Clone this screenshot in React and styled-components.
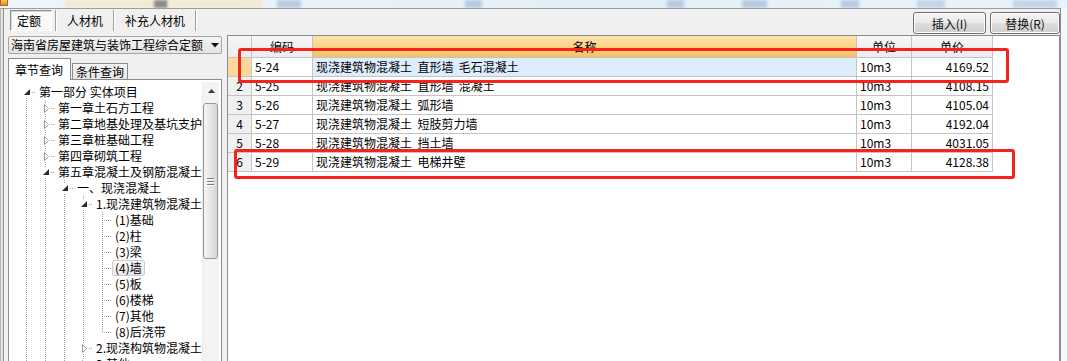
import React from 'react'
import styled, { createGlobalStyle, css } from 'styled-components'

const GlobalStyle = createGlobalStyle`
  html, body { margin: 0; padding: 0; background: #eef6f9; }
  body {
    font-family: "Noto Sans CJK SC", "Noto Sans", sans-serif;
    font-size: 12px;
    color: #000;
  }
  * { box-sizing: border-box; }
`

const Screen = styled.div`
  position: relative;
  width: 1067px;
  height: 361px;
  overflow: hidden;
  display: flex;
  flex-direction: column;
`

// blurred strip of whatever sits behind the window
const Backdrop = styled.div`
  height: 8px;
  flex: none;
  display: flex;
  background: linear-gradient(to right, #eef5fb, #e3eff8 55%, #e9f3fa);
  overflow: hidden;
`
const AppIcon = styled.div`
  width: 8px;
  height: 6px;
  flex: none;
  background: linear-gradient(#f9c86a, #e48a22);
  border: 1px solid #b8651a;
  border-top: none;
`
const Blob = styled.div`
  flex: none;
  width: ${p => p.$w}px;
  margin-left: ${p => p.$gap}px;
  background: ${p => p.$color};
  filter: blur(1.5px);
`

const Desk = styled.div`
  flex: 1;
  display: flex;
  min-height: 0;
`
const Outside = styled.div`
  flex: 1;
  background: #f1f9fa;
`
const Window = styled.div`
  width: 1061px;
  flex: none;
  display: flex;
  flex-direction: column;
  background: #f0f0f0;
  border-top: 1px solid #9c9c9c;
  border-left: 1px solid #b8b8b8;
  border-right: 1px solid #8e8e8e;
  box-shadow: inset 2px 0 0 #e4e4e4, inset 3px 0 0 #8f8f8f;
  padding-left: 3px;
`

const Toolbar = styled.div`
  height: 26px;
  flex: none;
  display: flex;
  justify-content: space-between;
  align-items: flex-start;
  padding-left: 6px;
`
const TabStrip = styled.div`
  display: flex;
  margin-top: 1px;
  height: 21px;
`
const Tab = styled.div`
  width: ${p => p.$w}px;
  height: 21px;
  display: flex;
  align-items: center;
  justify-content: center;
  line-height: 14px;
  ${p => p.$active && css`
    justify-content: flex-start;
    padding-left: 6px;
    background: #f9f9f9;
    border: 1px solid;
    border-color: #8d8d8d #ffffff #ffffff #8d8d8d;
    box-shadow: inset 1px 1px 0 #d8d8d8;
  `}
`
const Sep = styled.div`
  width: 2px;
  height: 21px;
  margin-left: ${p => p.$gap || 0}px;
  border-left: 1px solid #a0a0a0;
  border-right: 1px solid #ffffff;
`
const Buttons = styled.div`
  display: flex;
  gap: 4px;
  margin-top: 3px;
`
const Button = styled.div`
  width: ${p => p.$w}px;
  height: 22px;
  display: flex;
  align-items: center;
  justify-content: center;
  border: 1px solid #707070;
  border-radius: 3px;
  background: linear-gradient(#f2f2f2 0%, #ebebeb 50%, #dddddd 51%, #cfcfcf 100%);
  box-shadow: inset 0 0 0 1px #fcfcfc;
  color: #111;
`

const Main = styled.div`
  flex: 1;
  display: flex;
  gap: 5px;
  padding-left: 4px;
  min-height: 0;
`
const LeftPanel = styled.div`
  width: 214px;
  flex: none;
  display: flex;
  flex-direction: column;
  min-height: 0;
`
const Dropdown = styled.div`
  margin-top: 1px;
  height: 18px;
  flex: none;
  display: flex;
  align-items: center;
  justify-content: space-between;
  padding: 0 2px 0 2px;
  border: 1px solid #a5a5a5;
  border-radius: 2px;
  background: linear-gradient(#f4f4f4, #e4e4e4);
  line-height: 14px;
  white-space: nowrap;
`
const SubTabs = styled.div`
  margin-top: 4px;
  height: 21px;
  flex: none;
  display: flex;
  align-items: flex-end;
`
const SubTab = styled.div`
  width: ${p => p.$w}px;
  display: flex;
  align-items: center;
  border: 1px solid #8c8c8c;
  border-bottom: none;
  line-height: 14px;
  ${p => p.$active ? css`
    height: 22px;
    margin-bottom: -1px;
    padding-left: 6px;
    background: #ffffff;
    position: relative;
    z-index: 1;
  ` : css`
    height: 16px;
    margin-left: 1px;
    justify-content: center;
    background: linear-gradient(#f6f6f6, #e6e6e6);
  `}
`
const TreeBox = styled.div`
  flex: 1;
  min-height: 0;
  display: flex;
  border: 1px solid #8c8c8c;
  border-bottom: none;
  background: #fff;
  overflow: hidden;
`
const TreeList = styled.div`
  flex: 1;
  min-width: 0;
  padding: 4px 0 0 8px;
  overflow: hidden;
`
const TreeRow = styled.div`
  display: flex;
  height: 16px;
  line-height: 14px;
  white-space: nowrap;
`

const dotsV = (top, h) =>
  `repeating-linear-gradient(to bottom, #a0a0a0 0 1px, transparent 1px 2px) 9px ${top}px / 1px ${h}px no-repeat`
const dotsH = `repeating-linear-gradient(to right, #a0a0a0 0 1px, transparent 1px 2px) 9px 8px / 10px 1px no-repeat`

const Guide = styled.div`
  width: 19px;
  flex: none;
  background: ${p => (p.$on ? dotsV(0, 16) : 'none')};
`
const Joint = styled.div`
  width: 19px;
  flex: none;
  display: flex;
  align-items: center;
  background: ${p => [p.$up && dotsV(0, 8), p.$next && dotsV(8, 8), dotsH].filter(Boolean).join(', ')};
`
const Expander = styled.div`
  width: 8px;
  height: 10px;
  margin-left: 6px;
  display: flex;
  align-items: center;
  justify-content: center;
  background: #fff;
`
const Label = styled.div`
  height: 16px;
  display: flex;
  align-items: center;
  padding: 0 2px;
  border: 1px solid transparent;
  border-radius: 2px;
  ${p => p.$hot && css`
    border-color: #cdcdcd;
    background: linear-gradient(#fafafa, #e8e8e8);
  `}
`

const ScrollBar = styled.div`
  width: 17px;
  flex: none;
  margin: 2px 2px 0 0;
  display: flex;
  flex-direction: column;
  align-items: stretch;
  background: #f3f3f3;
  border-left: 1px solid #ebebeb;
`
const ScrollArrow = styled.div`
  height: 17px;
  display: flex;
  align-items: center;
  justify-content: center;
`
const Thumb = styled.div`
  margin: 4px 1px 0 0;
  height: 156px;
  display: flex;
  flex-direction: column;
  align-items: center;
  justify-content: center;
  gap: 2px;
  border: 1px solid #979797;
  border-radius: 3px;
  background: linear-gradient(to right, #f6f6f6, #e6e6e6 50%, #d6d6d6);
`
const Grip = styled.div`
  width: 7px;
  height: 1px;
  background: #7a7a7a;
  box-shadow: 0 1px 0 #ffffff;
`

const GridPanel = styled.div`
  flex: 1;
  min-width: 0;
  border: 1px solid #8c8c8c;
  border-bottom: none;
  background: #fff;
  overflow: hidden;
`
const GridRow = styled.div`
  display: grid;
  grid-template-columns: 24px 61px 544px 55px 81px;
  height: ${p => (p.$head ? 22 : 19)}px;
`
const Cell = styled.div`
  display: flex;
  align-items: center;
  justify-content: ${p => (p.$align === 'right' ? 'flex-end' : p.$align === 'center' ? 'center' : 'flex-start')};
  padding: 0 3px;
  border-right: 1px solid #c4c4c4;
  border-bottom: 1px solid #c4c4c4;
  background: ${p => p.$bg || '#ffffff'};
  line-height: 14px;
  white-space: nowrap;
  overflow: hidden;
`

const Mark = styled.div`
  position: absolute;
  left: ${p => p.$x}px;
  top: ${p => p.$y}px;
  width: ${p => p.$w}px;
  height: ${p => p.$h}px;
  border: 3px solid #f4231b;
  border-radius: 3px;
  pointer-events: none;
`

const HEAD_GRAY = 'linear-gradient(#f7f7f7, #ececec)'
const HEAD_ORANGE = 'linear-gradient(#fde4ac, #f3c263)'
const NUM_GRAY = '#f0f0f0'

const blobs = [
  { gap: 57, w: 89, color: '#f3ead2' },
  { gap: 0, w: 14, color: '#8c8b84' },
  { gap: 0, w: 95, color: '#f3ead2' },
  { gap: 14, w: 24, color: '#b7cbe0' },
  { gap: 164, w: 17, color: '#b7cbe0' },
  { gap: 185, w: 17, color: '#b7cbe0' },
  { gap: 58, w: 25, color: '#b7cbe0' },
  { gap: 74, w: 18, color: '#b7cbe0' },
  { gap: 58, w: 28, color: '#c2d4e6' },
  { gap: 68, w: 44, color: '#c2d4e6' },
]

// level, text, kind ('open' | 'closed' | 'leaf'), guides for ancestor lines, has next sibling
const tree = [
  { level: 0, text: '第一部分 实体项目', kind: 'open', guides: [], next: true, first: true },
  { level: 1, text: '第一章土石方工程', kind: 'closed', guides: [true], next: true },
  { level: 1, text: '第二章地基处理及基坑支护', kind: 'closed', guides: [true], next: true },
  { level: 1, text: '第三章桩基础工程', kind: 'closed', guides: [true], next: true },
  { level: 1, text: '第四章砌筑工程', kind: 'closed', guides: [true], next: true },
  { level: 1, text: '第五章混凝土及钢筋混凝土', kind: 'open', guides: [true], next: true },
  { level: 2, text: '一、现浇混凝土', kind: 'open', guides: [true, true], next: true },
  { level: 3, text: '1.现浇建筑物混凝土', kind: 'open', guides: [true, true, true], next: true },
  { level: 4, text: '(1)基础', kind: 'leaf', guides: [true, true, true, true], next: true },
  { level: 4, text: '(2)柱', kind: 'leaf', guides: [true, true, true, true], next: true },
  { level: 4, text: '(3)梁', kind: 'leaf', guides: [true, true, true, true], next: true },
  { level: 4, text: '(4)墙', kind: 'leaf', guides: [true, true, true, true], next: true, hot: true },
  { level: 4, text: '(5)板', kind: 'leaf', guides: [true, true, true, true], next: true },
  { level: 4, text: '(6)楼梯', kind: 'leaf', guides: [true, true, true, true], next: true },
  { level: 4, text: '(7)其他', kind: 'leaf', guides: [true, true, true, true], next: true },
  { level: 4, text: '(8)后浇带', kind: 'leaf', guides: [true, true, true, true], next: false },
  { level: 3, text: '2.现浇构筑物混凝土', kind: 'closed', guides: [true, true, true], next: true },
  { level: 3, text: '3.其他', kind: 'closed', guides: [true, true, true], next: false },
]

const rows = [
  { n: '', code: '5-24', name: '现浇建筑物混凝土  直形墙  毛石混凝土', unit: '10m3', price: '4169.52', current: true },
  { n: '2', code: '5-25', name: '现浇建筑物混凝土  直形墙  混凝土', unit: '10m3', price: '4108.15' },
  { n: '3', code: '5-26', name: '现浇建筑物混凝土  弧形墙', unit: '10m3', price: '4105.04' },
  { n: '4', code: '5-27', name: '现浇建筑物混凝土  短肢剪力墙', unit: '10m3', price: '4192.04' },
  { n: '5', code: '5-28', name: '现浇建筑物混凝土  挡土墙', unit: '10m3', price: '4031.05' },
  { n: '6', code: '5-29', name: '现浇建筑物混凝土  电梯井壁', unit: '10m3', price: '4128.38' },
]

function Arrow({ open }) {
  return open ? (
    <svg width="6" height="6" viewBox="0 0 6 6">
      <path d="M6 0 L6 6 L0 6 Z" fill="#2b2b2b" />
    </svg>
  ) : (
    <svg width="5" height="9" viewBox="0 0 5 9">
      <path d="M0.5 0.5 L4.5 4.5 L0.5 8.5 Z" fill="#fff" stroke="#9a9a9a" strokeWidth="1" />
    </svg>
  )
}

function App() {
  return (
    <Screen>
      <GlobalStyle />
      <Backdrop>
        <AppIcon />
        {blobs.map((b, i) => (
          <Blob key={i} $gap={b.gap} $w={b.w} $color={b.color} />
        ))}
      </Backdrop>
      <Desk>
        <Window>
          <Toolbar>
            <TabStrip>
              <Tab $active $w={42}>定额</Tab>
              <Sep $gap={3} />
              <Tab $w={56}>人材机</Tab>
              <Sep />
              <Tab $w={80}>补充人材机</Tab>
              <Sep />
            </TabStrip>
            <Buttons>
              <Button $w={73}>插入(I)</Button>
              <Button $w={70}>替换(R)</Button>
            </Buttons>
          </Toolbar>
          <Main>
            <LeftPanel>
              <Dropdown>
                <span>海南省房屋建筑与装饰工程综合定额</span>
                <svg width="8" height="5" viewBox="0 0 8 5">
                  <path d="M0 0 L8 0 L4 4.5 Z" fill="#111" />
                </svg>
              </Dropdown>
              <SubTabs>
                <SubTab $active $w={63}>章节查询</SubTab>
                <SubTab $w={56}>条件查询</SubTab>
              </SubTabs>
              <TreeBox>
                <TreeList>
                  {tree.map((t, i) => (
                    <TreeRow key={i}>
                      {t.guides.map((on, g) => (
                        <Guide key={g} $on={on} />
                      ))}
                      <Joint $up={!t.first} $next={t.next}>
                        {t.kind !== 'leaf' && (
                          <Expander>
                            <Arrow open={t.kind === 'open'} />
                          </Expander>
                        )}
                      </Joint>
                      <Label $hot={t.hot}>{t.text}</Label>
                    </TreeRow>
                  ))}
                </TreeList>
                <ScrollBar>
                  <ScrollArrow>
                    <svg width="7" height="4" viewBox="0 0 7 4">
                      <path d="M0 4 L3.5 0 L7 4 Z" fill="#3c3c3c" />
                    </svg>
                  </ScrollArrow>
                  <Thumb>
                    <Grip />
                    <Grip />
                    <Grip />
                  </Thumb>
                </ScrollBar>
              </TreeBox>
            </LeftPanel>
            <GridPanel>
              <GridRow $head>
                <Cell $bg={HEAD_GRAY} />
                <Cell $bg={HEAD_GRAY} $align="center">编码</Cell>
                <Cell $bg={HEAD_ORANGE} $align="center">名称</Cell>
                <Cell $bg={HEAD_GRAY} $align="center">单位</Cell>
                <Cell $bg={HEAD_GRAY} $align="center">单价</Cell>
              </GridRow>
              {rows.map((r, i) => (
                <GridRow key={i}>
                  <Cell $bg={r.current ? '#fdd89b' : NUM_GRAY} $align="center">{r.n}</Cell>
                  <Cell>{r.code}</Cell>
                  <Cell $bg={r.current ? '#ddedfc' : undefined} style={{ whiteSpace: 'pre' }}>{r.name}</Cell>
                  <Cell>{r.unit}</Cell>
                  <Cell $align="right">{r.price}</Cell>
                </GridRow>
              ))}
            </GridPanel>
          </Main>
        </Window>
        <Outside />
      </Desk>
      <Mark $x={238} $y={48} $w={771} $h={35} />
      <Mark $x={234} $y={149} $w={781} $h={30} />
    </Screen>
  )
}

export default App
